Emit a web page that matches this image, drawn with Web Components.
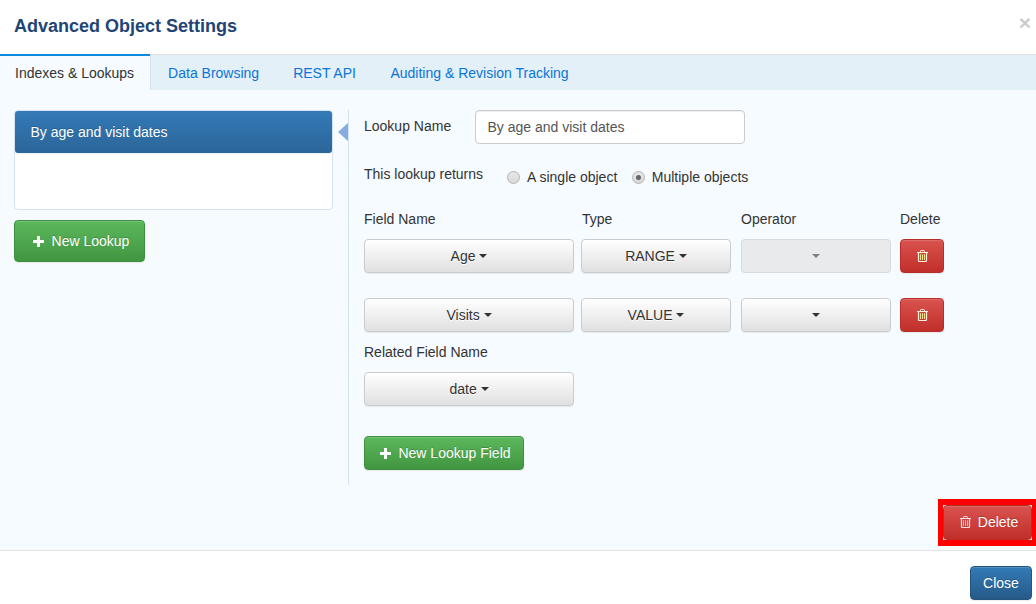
<!DOCTYPE html>
<html lang="en">
<head>
<meta charset="utf-8">
<title>Advanced Object Settings</title>
<style>
html,body{margin:0;padding:0;background:#fff;height:604px;overflow:hidden}
body{font:14px/20px "Liberation Sans",Arial,sans-serif;color:#333}
</style>
</head>
<body>
<settings-modal></settings-modal>
<script>
const define=(name,html)=>{
  customElements.define(name,class extends HTMLElement{
    constructor(){super();this.attachShadow({mode:'open'}).innerHTML=html;}
  });
};
const TRASH=(c='#fff3dc',b='#f5dd8c')=>`<svg width="11" height="12" viewBox="0 0 11 12" fill="none" style="display:block"><path d="M0 2.500h11" stroke="${c}"/><path d="M3.500 2.500V1.300c0-.5.3-.8.7-.8h2.600c.4 0 .7.3.7.8v1.200" stroke="${c}"/><path d="M1.500 2.500v8c0 .6.3 1 .9 1h6.200c.6 0 .9-.4.9-1v-8" stroke="${c}" stroke-width="1.200"/><path d="M3.500 4.200v5.800M5.500 4.200v5.800M7.500 4.200v5.800" stroke="${b}" stroke-width="1.100"/></svg>`;
const PLUS='<svg width="11" height="11" viewBox="0 0 11 11" style="display:block"><path d="M4 0h3v4h4v3H7v4H4V7H0V4h4z" fill="#fff"/></svg>';

define('ui-btn',`<style>
:host{display:inline-flex;box-sizing:border-box;height:34px;align-items:center;justify-content:center;gap:7px;border-radius:4px;border:1px solid #ccc;font-size:14px;line-height:20px;white-space:nowrap;box-shadow:inset 0 1px 0 rgba(255,255,255,.15),0 1px 1px rgba(0,0,0,.075);background:linear-gradient(#fff,#e0e0e0);color:#333;text-shadow:0 1px 0 #fff}
:host([disabled]){background:#e9eaec;border-color:#d9dadc;box-shadow:none}
.caret{width:0;height:0;border-top:4px solid #333;border-left:4px solid transparent;border-right:4px solid transparent;margin-left:-3.11px}
:host([disabled]) .caret{border-top-color:#808080}
:host([caret-only]) .caret{margin-left:0}
</style><slot></slot><span class="caret"></span>`);

define('ui-action',`<style>
:host{display:inline-flex;box-sizing:border-box;height:34px;align-items:center;justify-content:center;border-radius:4px;border:1px solid;font-size:14px;line-height:20px;white-space:nowrap;box-shadow:inset 0 1px 0 rgba(255,255,255,.15),0 1px 1px rgba(0,0,0,.075);text-shadow:0 -1px 0 rgba(0,0,0,.2);color:#fff}
:host([kind=success]){background:linear-gradient(#5cb85c,#419641);border-color:#3e8f3e}
:host([kind=danger]){background:linear-gradient(#d9534f,#c12e2a);border-color:#b92c28}
:host([kind=primary]){background:linear-gradient(#337ab7,#265a88);border-color:#245580}
::slotted([slot=icon]){display:flex;margin-right:8px}
</style><slot name="icon"></slot><slot></slot>`);

define('ui-tabs',`<style>
:host{display:flex;flex:none;height:36px;box-sizing:border-box;background:#e3f0f8;border-top:1px solid #e0e0e0;font-size:14px}
</style><slot></slot>`);

define('ui-tab',`<style>
:host{display:flex;align-items:center;padding:0 17px;color:#0a74d8;box-sizing:border-box}
:host([active]){color:#333;background:#f6fbff;box-shadow:inset 0 2px 0 #0a8adf;margin-top:-1px;border-right:1px solid #d5e2ee;padding:1px 16px 0 15px}
:host(:last-child){padding-left:17.500px}
</style><slot></slot>`);

define('ui-radio',`<style>
:host{display:inline-flex;align-items:center;gap:7px;line-height:20px}
.r{box-sizing:border-box;width:13px;height:13px;border-radius:50%;border:1px solid #b4b4b4;background:linear-gradient(#e8e8e8,#d8d8d8);display:flex;align-items:center;justify-content:center}
.d{width:5px;height:5px;border-radius:50%;background:#666;display:none}
:host([checked]) .d{display:block}
</style><span class="r"><span class="d"></span></span><slot></slot>`);

define('lookup-list',`<style>
:host{display:block;box-sizing:border-box;width:319px;height:100px;background:#fff;border:1px solid #d3e2f5;border-radius:4px}
.item{box-sizing:border-box;height:42px;padding:11px 15.500px;color:#fff;background:linear-gradient(#337ab7,#2b6599);border-radius:3px;text-shadow:0 -1px 0 #286090;line-height:20px;box-shadow:0 1px 0 #eef3f8}
</style><div class="item"><slot></slot></div>`);

define('field-row',`<style>
:host{display:grid;grid-template-columns:217px 160px 159px 44px;height:34px;align-items:stretch}
</style><slot></slot>`);

define('settings-modal',`<style>
:host{display:flex;flex-direction:column;height:604px;position:relative;background:#fff;color:#333}
header{height:54px;flex:none;display:flex;align-items:center;justify-content:space-between;padding:0 5px 1px 14px;box-sizing:border-box}
h4{margin:0;font-size:18px;font-weight:700;color:#1f4476;line-height:20px;position:relative;top:-1px}
.x{font-size:21px;font-weight:700;color:#000;opacity:.2;line-height:20px;text-shadow:0 1px 0 #fff;position:relative;top:-4px}
.body{height:496px;flex:none;background:#f6fbff;box-sizing:border-box;display:flex;flex-direction:column}
.main{display:flex;flex:none;padding:20px 0 0 14px;height:395px;box-sizing:border-box}
.left{width:334px;flex:none;display:flex;flex-direction:column;align-items:flex-start}
.new{margin-top:10px;width:131px;height:42px;padding-left:3px}
.right{position:relative;border-left:1px solid #d3e2f5;padding-left:15px;width:660px;height:375px;box-sizing:border-box}
.arrow{position:absolute;left:-11px;top:13px;width:0;height:0;border-top:9px solid transparent;border-bottom:9px solid transparent;border-right:10px solid #86ace0}
.name{display:flex;height:34px}
.name label{width:112px;line-height:33px}
.inp{box-sizing:border-box;width:269px;height:34px;margin-left:-1px;flex:none;width:270px;background:#fff;border:1px solid #ccc;border-radius:4px;padding:6px 11px 6px 11.500px;color:#555;box-shadow:inset 0 1px 1px rgba(0,0,0,.075)}
.ret{display:flex;height:20px;margin-top:20px;align-items:flex-start}
.ret>span{width:143px}
.ret ui-radio{position:relative;top:3px}
.ret ui-radio+ui-radio{margin-left:14.500px}
.heads{display:grid;grid-template-columns:217px 160px 159px 44px;margin-top:25px;height:20px;margin-bottom:10px}
.heads span:nth-child(2){margin-left:1px}
.gap{margin-top:25px}
.rel{margin:10px 0;height:20px;line-height:20px}
.date{width:210px}
.nlf{margin-top:30px;width:160px;padding-left:3px}
.nlf span{margin-right:7px}
.foot-del{display:flex;flex:none;justify-content:flex-end;padding:0 4px 0 0;margin-top:20px;height:35px}
.foot-del ui-action{width:89px;height:35px;padding:0 0 1px 3px}
.foot-del span{margin-right:7px}
footer{flex:1;display:flex;justify-content:flex-end;align-items:flex-start;padding:15px 4px 0 0;border-top:1px solid #e5e5e5}
footer ui-action{width:62px}
.mark{position:absolute;left:938px;top:499px;width:98px;height:47px;box-sizing:border-box;border:solid #f00;border-width:6px 4px 6px 5px;pointer-events:none}
</style>
<header><h4>Advanced Object Settings</h4><span class="x">×</span></header>
<div class="body">
<ui-tabs><ui-tab active>Indexes &amp; Lookups</ui-tab><ui-tab>Data Browsing</ui-tab><ui-tab>REST API</ui-tab><ui-tab>Auditing &amp; Revision Tracking</ui-tab></ui-tabs>
<div class="main">
<div class="left"><lookup-list>By age and visit dates</lookup-list>
<ui-action class="new" kind="success"><span slot="icon">${PLUS}</span>New Lookup</ui-action></div>
<div class="right"><span class="arrow"></span>
<div class="name"><label>Lookup Name</label><div class="inp">By age and visit dates</div></div>
<div class="ret"><span>This lookup returns</span><ui-radio>A single object</ui-radio><ui-radio checked>Multiple objects</ui-radio></div>
<div class="heads"><span>Field Name</span><span>Type</span><span>Operator</span><span>Delete</span></div>
<field-row>
<ui-btn style="width:210px">Age</ui-btn><ui-btn style="width:150px">RANGE</ui-btn><ui-btn disabled caret-only style="width:150px"></ui-btn><ui-action kind="danger">${TRASH()}</ui-action>
</field-row>
<field-row class="gap">
<ui-btn style="width:210px">Visits</ui-btn><ui-btn style="width:150px">VALUE</ui-btn><ui-btn caret-only style="width:150px"></ui-btn><ui-action kind="danger">${TRASH()}</ui-action>
</field-row>
<div class="rel">Related Field Name</div>
<ui-btn class="date">date</ui-btn><br>
<ui-action class="nlf" kind="success"><span slot="icon">${PLUS}</span>New Lookup Field</ui-action>
</div></div>
<div class="foot-del"><ui-action kind="danger"><span slot="icon">${TRASH('#fbdfe8','#eeaecb')}</span>Delete</ui-action></div>
</div>
<footer><ui-action kind="primary">Close</ui-action></footer>
<div class="mark"></div>`);
</script>
</body>
</html>
